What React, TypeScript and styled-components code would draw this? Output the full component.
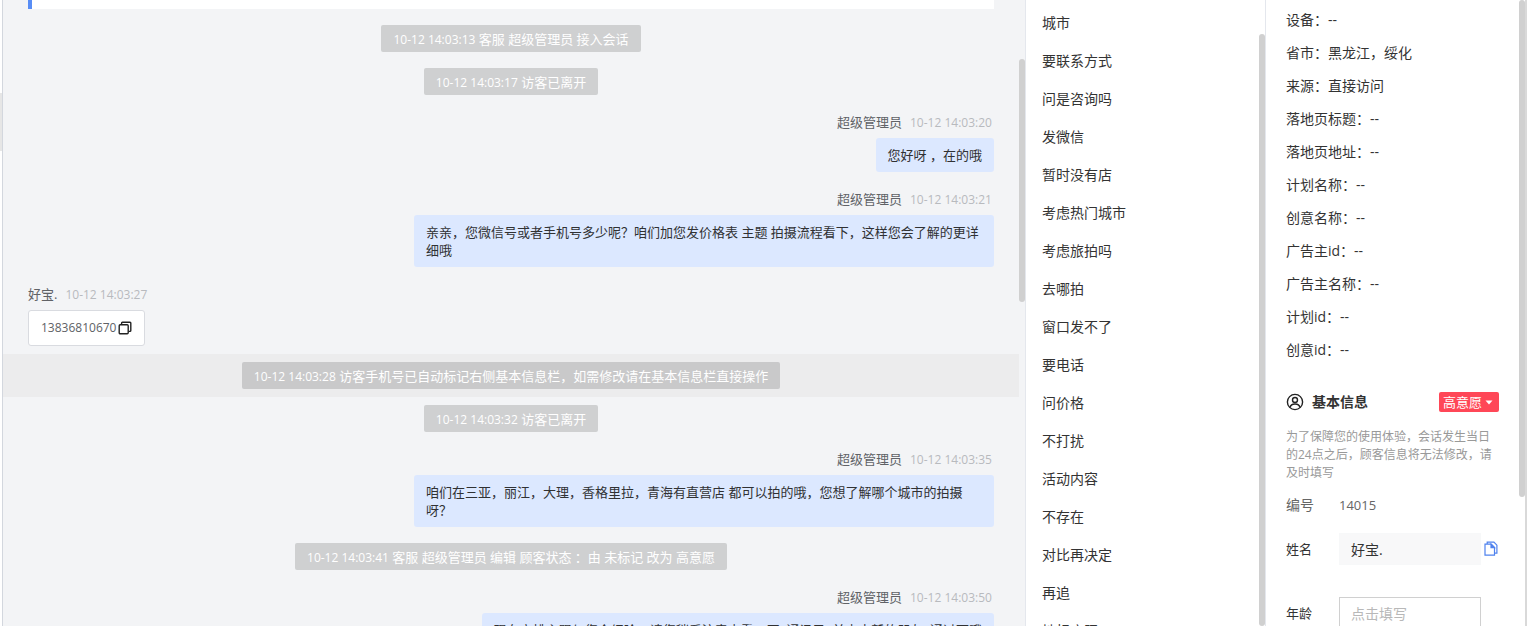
import React from "react";
import styled, { createGlobalStyle, css } from "styled-components";

const Global = createGlobalStyle`
  *, *::before, *::after { box-sizing: border-box; }
  html, body, #root { height: 100%; }
  body {
    margin: 0;
    overflow: hidden;
    background: #fff;
    color: #333;
    font-family: "Open Sans", "Noto Sans CJK SC", sans-serif;
    font-size: 14px;
    line-height: 18px;
  }
  button, input { font: inherit; color: inherit; }
  button { border: 0; padding: 0; background: none; cursor: pointer; }
`;

const Page = styled.div`
  display: flex;
  height: 100vh;
  overflow: hidden;
`;

const Rail = styled.div`
  flex: 0 0 3px;
  padding-top: 93px;
  border-right: 1px solid #d3d7de;
`;

const RailThumb = styled.div`
  height: 58px;
  background: #e6e6e6;
`;

const ScrollTrack = styled.div<{ $top?: number }>`
  flex: 0 0 6px;
  padding-top: ${(p) => p.$top ?? 0}px;
`;

const ScrollThumb = styled.div<{ $height: string }>`
  height: ${(p) => p.$height};
  border-radius: 3px;
  background: #d0d0d0;
`;

const Chat = styled.main`
  flex: 1;
  min-width: 0;
  display: flex;
  background: #f3f4f6;
  border-right: 1px solid #e4e7ed;
`;

const Stream = styled.div`
  flex: 1;
  min-width: 0;
  font-size: 13px;
`;

const QuoteCard = styled.div`
  height: 9px;
  margin: 0 25px 8px;
  background: #fff;
  border-left: 4px solid #588df5;
`;

const NoticeRow = styled.div<{ $marked?: boolean }>`
  display: flex;
  justify-content: center;
  padding: 8px 0;
  ${(p) => p.$marked && css`background: #ececed;`}
`;

const Notice = styled.p<{ $marked?: boolean }>`
  margin: 0;
  padding: 5px 12px 4px;
  border-radius: 2px;
  background: ${(p) => (p.$marked ? "#c9c9ca" : "#cfd0d1")};
  color: #fff;
  white-space: nowrap;
`;

const Time = styled.time`
  font-size: 12px;
  line-height: 12px;
`;

const Message = styled.article<{ $own?: boolean }>`
  display: flex;
  flex-direction: column;
  align-items: ${(p) => (p.$own ? "flex-end" : "flex-start")};
  padding: 10px 25px 8px;
`;

const Meta = styled.header`
  display: flex;
  align-items: baseline;
  gap: 8px;
  height: 18px;
  margin-bottom: 7px;
  color: #606266;

  ${Time} { min-width: 84px; color: #b8babe; }
`;

const Bubble = styled.div<{ $own?: boolean }>`
  display: flex;
  align-items: center;
  gap: 2px;
  max-width: 580px;
  padding: 8px 12px;
  border-radius: 3px;
  ${(p) =>
    p.$own
      ? css`background: #dce8ff; color: #303133;`
      : css`height: 36px; background: #fff; border: 1px solid #d9dbe0; color: #606266;`}
`;

const CopyButton = styled.button`
  display: flex;
  color: #222;
`;

const Replies = styled.aside`
  flex: 0 0 240px;
  display: flex;
  border-right: 1px solid #e4e7ed;
`;

const ReplyList = styled.ul`
  flex: 1;
  margin: 0;
  padding: 4px 16px 0;
  list-style: none;
`;

const Reply = styled.button`
  display: block;
  height: 38px;
  white-space: nowrap;
`;

const Details = styled.aside`
  flex: 0 0 261px;
  display: flex;
  border-right: 2px solid #d9d9d9;
`;

const DetailsBody = styled.div`
  flex: 1;
  min-width: 0;
  padding: 3px 20px 0;
`;

const Facts = styled.dl`
  margin: 0 0 25px;
`;

const Fact = styled.div`
  display: flex;
  height: 33px;
  align-items: center;

  dd { margin: 0; }
`;

const SectionHead = styled.div`
  display: flex;
  align-items: center;
  height: 22px;
  margin-bottom: 15px;

  h2 {
    flex: 1;
    margin: 0 0 0 8px;
    font-size: 14px;
    font-weight: 700;
  }
`;

const Intent = styled.button`
  display: flex;
  align-items: center;
  gap: 3px;
  height: 20px;
  padding: 0 6px 0 4px;
  border-radius: 2px;
  background: #ff4757;
  color: #fff;
  font-size: 13px;
`;

const Hint = styled.p`
  width: 208px;
  margin: 0 0 7px;
  color: #999;
  font-size: 12px;
`;

const Field = styled.div`
  display: flex;
  align-items: center;
  height: 32px;
  margin-bottom: 32px;

  label { flex: 0 0 53px; font-size: 13px; }
  ${CopyButton} { margin-left: 3px; }
`;

const Record = styled(Field)`
  margin-bottom: 12px;
  color: #666;
  span { flex: 0 0 53px; }
  output { font-size: 13px; }
`;

const TextInput = styled.input<{ $filled?: boolean }>`
  flex: 0 0 142px;
  width: 142px;
  height: 32px;
  padding: 0 11px;
  border: 1px solid ${(p) => (p.$filled ? "#f7f8f9" : "#d0d0d0")};
  background: ${(p) => (p.$filled ? "#f8f8f9" : "#fff")};
  outline: 0;

  &::placeholder { color: #b8b8b8; opacity: 1; }
`;

const CopyIcon = () => (
  <svg width="14" height="14" viewBox="0 0 14 14" fill="none" stroke="currentColor" strokeWidth="1.4">
    <rect x="1.2" y="3.7" width="9" height="9" rx="1" />
    <path d="M3.6 3.5V2q0-.8.8-.8h7.6q.8 0 .8.8v7.6q0 .8-.8.8h-1.6" />
  </svg>
);

const PagesIcon = () => (
  <svg width="14" height="16" viewBox="0 0 14 16" fill="none" stroke="#4f82ee" strokeWidth="1.2">
    <path d="M1 3.2h6.2l3.300 3.300v7.700H1z" />
    <path d="M3.200 3V1.200h6.700l3 3v8h-2.200" />
    <path d="M7 3.200v3.400h3.500z" fill="#4f82ee" />
  </svg>
);

const UserIcon = () => (
  <svg width="18" height="18" viewBox="0 0 18 18" fill="none" stroke="#222" strokeWidth="1.4">
    <circle cx="9" cy="9" r="7.6" />
    <circle cx="9" cy="7" r="2.5" />
    <path d="M4 14.500c.5-2.300 2-3.500 5-3.500s4.500 1.200 5 3.500" />
  </svg>
);

const CaretIcon = () => (
  <svg width="8" height="5" viewBox="0 0 8 5" fill="#fff">
    <path d="M.5.500h7L4 4.500z" />
  </svg>
);

type Entry =
  | { kind: "notice"; time: string; text: string; marked?: boolean }
  | { kind: "message"; author: string; time: string; text: string; own?: boolean };

const ADMIN = "超级管理员";

const entries: Entry[] = [
  { kind: "notice", time: "10-12 14:03:13", text: "客服 超级管理员 接入会话" },
  { kind: "notice", time: "10-12 14:03:17", text: "访客已离开" },
  { kind: "message", own: true, author: ADMIN, time: "10-12 14:03:20", text: "您好呀 ，在的哦" },
  {
    kind: "message", own: true, author: ADMIN, time: "10-12 14:03:21",
    text: "亲亲，您微信号或者手机号多少呢？咱们加您发价格表 主题 拍摄流程看下，这样您会了解的更详细哦",
  },
  { kind: "message", author: "好宝.", time: "10-12 14:03:27", text: "13836810670" },
  {
    kind: "notice", marked: true, time: "10-12 14:03:28",
    text: "访客手机号已自动标记右侧基本信息栏，如需修改请在基本信息栏直接操作",
  },
  { kind: "notice", time: "10-12 14:03:32", text: "访客已离开" },
  {
    kind: "message", own: true, author: ADMIN, time: "10-12 14:03:35",
    text: "咱们在三亚，丽江，大理，香格里拉，青海有直营店 都可以拍的哦，您想了解哪个城市的拍摄呀？",
  },
  { kind: "notice", time: "10-12 14:03:41", text: "客服 超级管理员 编辑 顾客状态 ：由 未标记 改为 高意愿" },
  {
    kind: "message", own: true, author: ADMIN, time: "10-12 14:03:50",
    text: "现在立排主跟与您介绍哈，请您稍后注意查看，再 \u00a0通讯录 \u00a0并点击新的朋友 \u00a0通过下哦",
  },
];

const replies = [
  "城市", "要联系方式", "问是咨询吗", "发微信", "暂时没有店", "考虑热门城市", "考虑旅拍吗", "去哪拍",
  "窗口发不了", "要电话", "问价格", "不打扰", "活动内容", "不存在", "对比再决定", "再追", "地标店照",
];

const facts: [string, string][] = [
  ["设备", "--"], ["省市", "黑龙江，绥化"], ["来源", "直接访问"], ["落地页标题", "--"], ["落地页地址", "--"],
  ["计划名称", "--"], ["创意名称", "--"], ["广告主id", "--"], ["广告主名称", "--"], ["计划id", "--"], ["创意id", "--"],
];

export default function App() {
  return (
    <>
      <Global />
      <Page>
        <Rail><RailThumb /></Rail>
        <Chat>
          <Stream>
            <QuoteCard />
            {entries.map((e) =>
              e.kind === "notice" ? (
                <NoticeRow key={e.time} $marked={e.marked}>
                  <Notice $marked={e.marked}><Time>{e.time}</Time> {e.text}</Notice>
                </NoticeRow>
              ) : (
                <Message key={e.time} $own={e.own}>
                  <Meta><span>{e.author}</span><Time>{e.time}</Time></Meta>
                  <Bubble $own={e.own}>
                    {e.own ? e.text : <Time as="span">{e.text}</Time>}
                    {!e.own && <CopyButton aria-label="复制"><CopyIcon /></CopyButton>}
                  </Bubble>
                </Message>
              )
            )}
          </Stream>
          <ScrollTrack $top={59}><ScrollThumb $height="243px" /></ScrollTrack>
        </Chat>
        <Replies>
          <ReplyList>
            {replies.map((r) => <li key={r}><Reply>{r}</Reply></li>)}
          </ReplyList>
          <ScrollTrack $top={34}><ScrollThumb $height="100%" /></ScrollTrack>
        </Replies>
        <Details>
          <DetailsBody>
            <Facts>
              {facts.map(([name, value]) => (
                <Fact key={name}><dt>{name}：</dt><dd>{value}</dd></Fact>
              ))}
            </Facts>
            <SectionHead>
              <UserIcon />
              <h2>基本信息</h2>
              <Intent>高意愿<CaretIcon /></Intent>
            </SectionHead>
            <Hint>为了保障您的使用体验，会话发生当日的24点之后，顾客信息将无法修改，请及时填写</Hint>
            <Record><span>编号</span><output>14015</output></Record>
            <Field>
              <label htmlFor="name">姓名</label>
              <TextInput id="name" defaultValue="好宝." $filled />
              <CopyButton aria-label="复制姓名"><PagesIcon /></CopyButton>
            </Field>
            <Field>
              <label htmlFor="age">年龄</label>
              <TextInput id="age" placeholder="点击填写" />
            </Field>
          </DetailsBody>
          <ScrollTrack><ScrollThumb $height="497px" /></ScrollTrack>
        </Details>
      </Page>
    </>
  );
}
